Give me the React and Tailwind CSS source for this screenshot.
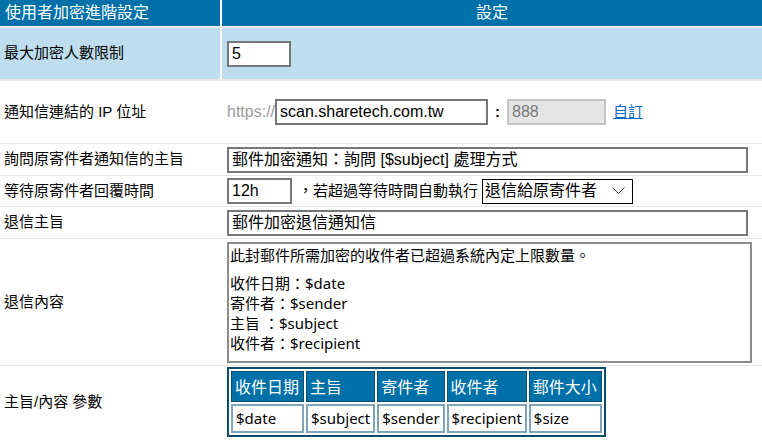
import React from "react";

const font = { fontFamily: "'Liberation Sans', 'Noto Sans CJK TC', sans-serif" };
const tfont = { fontFamily: "'Noto Sans', 'Noto Sans CJK TC', sans-serif" };

const Row = ({ label, h, bg = "bg-white", line = "border-b border-[#e6e6e6]", children }) => (
  <div className={`flex ${line} ${h}`}>
    <div className={`w-[220px] shrink-0 flex items-center pl-1 text-[15px] text-black ${bg}`}>{label}</div>
    <div className="w-[2px] shrink-0 bg-white" />
    <div className={`flex-1 flex items-center pl-[5px] ${bg}`}>{children}</div>
  </div>
);

const inputBox = "h-[26px] border-2 border-[#777] bg-white flex items-center px-[3px] text-[16px] text-black leading-none";

const params = [
  ["收件日期", "$date", "w-[73px]"],
  ["主旨", "$subject", "w-[67px]"],
  ["寄件者", "$sender", "w-[65px]"],
  ["收件者", "$recipient", "w-[77px]"],
  ["郵件大小", "$size", "w-[73px]"],
];

export default function App() {
  return (
    <div className="w-[762px] h-[441px] overflow-hidden bg-white" style={font}>
      {/* header */}
      <div className="flex h-[28px] border-b-2 border-[#e8e8e8] text-white text-[16px]">
        <div className="w-[220px] shrink-0 bg-[#0070a8] flex items-center pl-[5px]">使用者加密進階設定</div>
        <div className="w-[2px] shrink-0 bg-white" />
        <div className="flex-1 bg-[#0070a8] flex items-center justify-center">設定</div>
      </div>

      <Row label="最大加密人數限制" h="h-[53px]" bg="bg-[#bedef0]" line="border-b-2 border-[#e8e8e8]">
        <div className={`${inputBox} w-[64px]`}>5</div>
      </Row>

      <Row label="通知信連結的 IP 位址" h="h-[63px]">
        <span className="text-[16px] text-[#9a9a9a]">https://</span>
        <div className={`${inputBox} w-[213px]`}>scan.sharetech.com.tw</div>
        <span className="text-[15px] font-bold mx-[7px]">:</span>
        <div className="h-[26px] w-[99px] border-2 border-[#c4c4c4] bg-[#e4e4e4] flex items-center px-[3px] text-[16px] text-[#7a7a7a]">888</div>
        <a className="ml-[7px] text-[15px] text-[#0066cc] underline">自訂</a>
      </Row>

      <Row label="詢問原寄件者通知信的主旨" h="h-[32px]">
        <div className={`${inputBox} w-[521px] h-[25px]`}>郵件加密通知：詢問 [$subject] 處理方式</div>
      </Row>

      <Row label="等待原寄件者回覆時間" h="h-[31px]">
        <div className={`${inputBox} w-[65px] h-[25px]`}>12h</div>
        <span className="text-[15px] ml-[6px] mr-[4px]">，若超過等待時間自動執行</span>
        <div className="h-[25px] w-[151px] border border-black bg-white flex items-center justify-between pl-[2px] pr-[7px] text-[16px]">
          <span>退信給原寄件者</span>
          <svg width="13" height="8" viewBox="0 0 13 8" fill="none" stroke="#444" strokeWidth="1">
            <polyline points="0.5,0.5 6.5,6.5 12.5,0.5" />
          </svg>
        </div>
      </Row>

      <Row label="退信主旨" h="h-[32px]">
        <div className={`${inputBox} w-[521px] h-[26px]`}>郵件加密退信通知信</div>
      </Row>

      <Row label="退信內容" h="h-[127px]">
        <div className="w-[525px] h-[121px] border-2 border-[#8c8c8c] bg-white px-[1px] pt-[1px] text-[15px] leading-[20px] text-black" style={tfont}>
          <div>此封郵件所需加密的收件者已超過系統內定上限數量。</div>
          <div className="mt-[8px]">收件日期：$date</div>
          <div>寄件者：$sender</div>
          <div>主旨 ：$subject</div>
          <div>收件者：$recipient</div>
        </div>
      </Row>

      <Row label="主旨/內容 參數" h="h-[73px]" line="">
        <table className="border-2 border-[#0b4d6f] border-separate border-spacing-[2px] self-start mt-[1px] text-[15px] whitespace-nowrap" style={tfont}>
          <tbody>
            <tr>
              {params.map(([h, , w]) => (
                <td key={h} className={`${w} h-[31px] bg-[#0070a8] border border-[#0b4d6f] text-white px-[3px] text-[16px] leading-none`}>{h}</td>
              ))}
            </tr>
            <tr>
              {params.map(([h, v, w]) => (
                <td key={h} className={`${w} h-[29px] bg-white border-2 border-[#7fa4ba] text-black px-[3px] leading-none`}>{v}</td>
              ))}
            </tr>
          </tbody>
        </table>
      </Row>
    </div>
  );
}
